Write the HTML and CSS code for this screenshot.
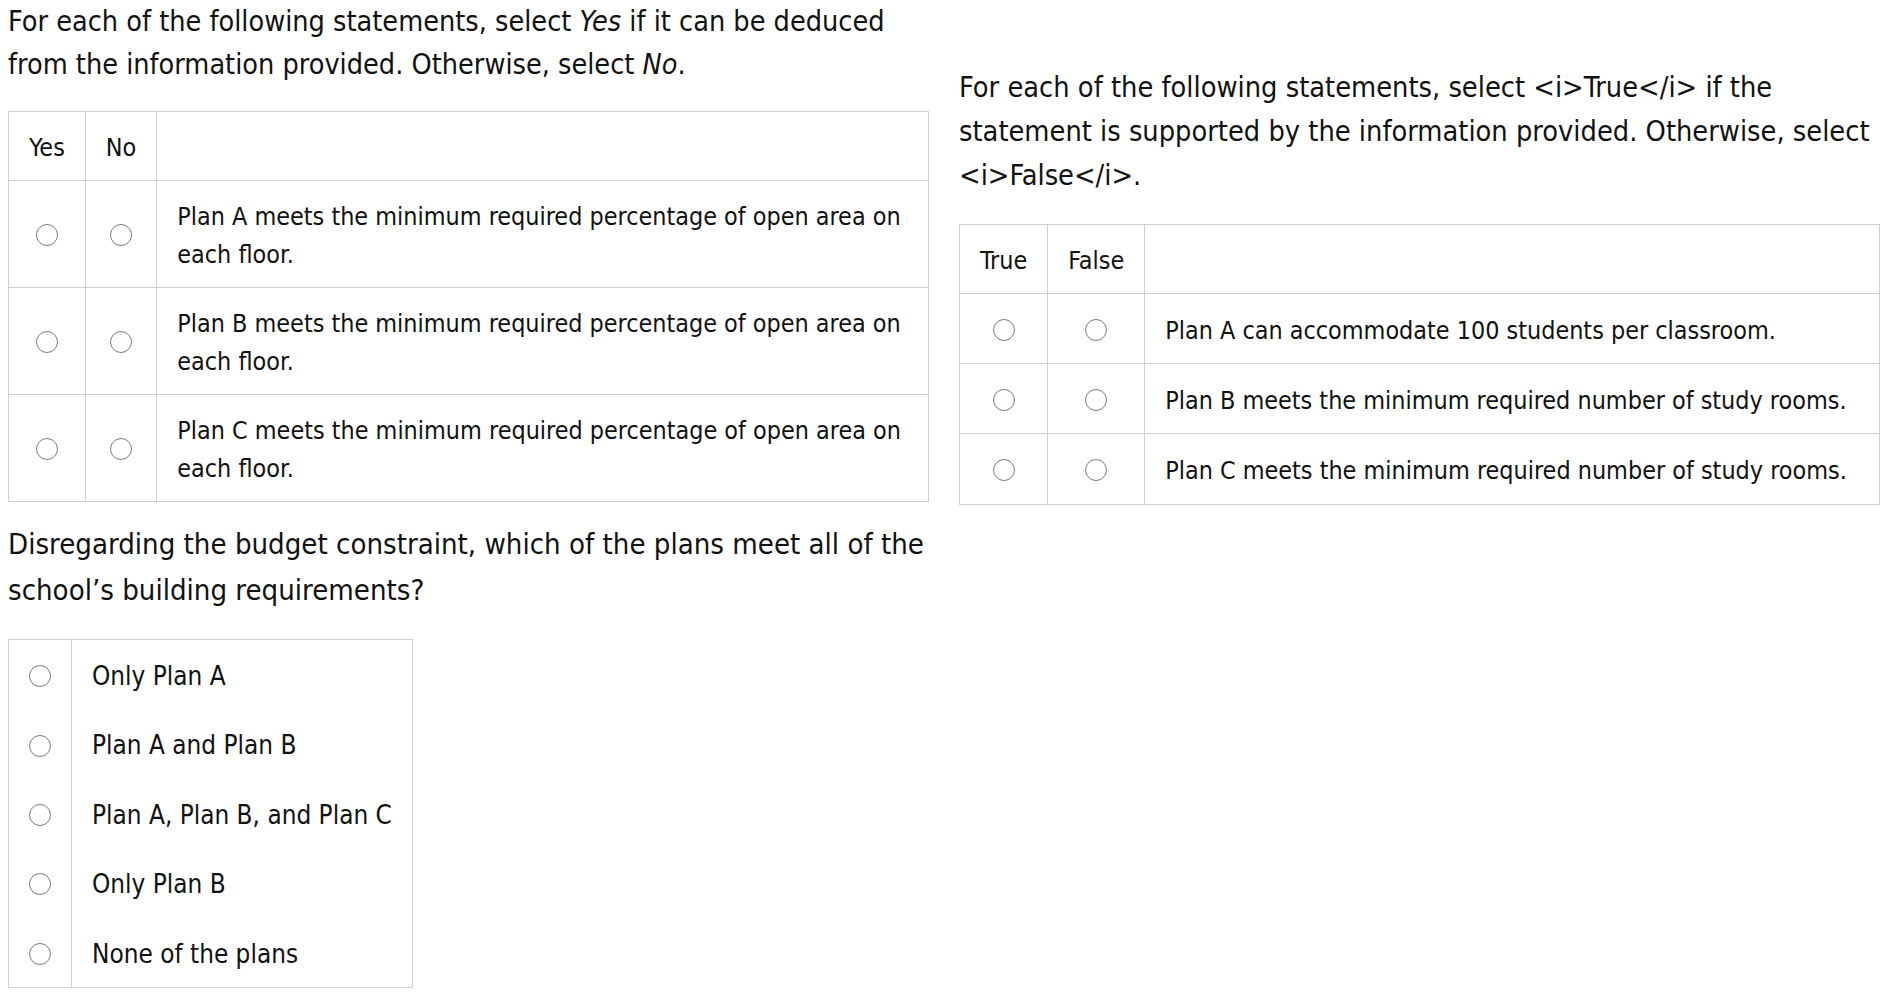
FILE: index.html
```html
<!DOCTYPE html>
<html>
<head>
<meta charset="utf-8">
<link rel="stylesheet" href="styles.css">
</head>
<body>
<div class="page">
  <section class="col col-left">
    <p class="prompt">For each of the following statements, select <i>Yes</i> if it can be deduced from the information provided. Otherwise, select <i>No</i>.</p>
    <table class="grid grid-wide">
      <tr class="head"><td class="opt">Yes</td><td class="opt">No</td><td class="stmt"></td></tr>
      <tr><td class="opt pick"><span class="radio"></span></td><td class="opt pick"><span class="radio"></span></td><td class="stmt">Plan A meets the minimum required percentage of open area on each floor.</td></tr>
      <tr><td class="opt pick"><span class="radio"></span></td><td class="opt pick"><span class="radio"></span></td><td class="stmt">Plan B meets the minimum required percentage of open area on each floor.</td></tr>
      <tr><td class="opt pick"><span class="radio"></span></td><td class="opt pick"><span class="radio"></span></td><td class="stmt">Plan C meets the minimum required percentage of open area on each floor.</td></tr>
    </table>
    <p class="question">Disregarding the budget constraint, which of the plans meet all of the school’s building requirements?</p>
    <table class="grid choices">
      <tr><td class="opt pick"><span class="radio"></span></td><td class="stmt">Only Plan A</td></tr>
      <tr><td class="opt pick"><span class="radio"></span></td><td class="stmt">Plan A and Plan B</td></tr>
      <tr><td class="opt pick"><span class="radio"></span></td><td class="stmt">Plan A, Plan B, and Plan C</td></tr>
      <tr><td class="opt pick"><span class="radio"></span></td><td class="stmt">Only Plan B</td></tr>
      <tr><td class="opt pick"><span class="radio"></span></td><td class="stmt">None of the plans</td></tr>
    </table>
  </section>
  <section class="col col-right">
    <p class="prompt">For each of the following statements, select &lt;i&gt;True&lt;/i&gt; if the statement is supported by the information provided. Otherwise, select &lt;i&gt;False&lt;/i&gt;.</p>
    <table class="grid grid-wide tf">
      <tr class="head"><td class="opt">True</td><td class="opt">False</td><td class="stmt"></td></tr>
      <tr><td class="opt pick"><span class="radio"></span></td><td class="opt pick"><span class="radio"></span></td><td class="stmt">Plan A can accommodate 100 students per classroom.</td></tr>
      <tr><td class="opt pick"><span class="radio"></span></td><td class="opt pick"><span class="radio"></span></td><td class="stmt">Plan B meets the minimum required number of study rooms.</td></tr>
      <tr><td class="opt pick"><span class="radio"></span></td><td class="opt pick"><span class="radio"></span></td><td class="stmt">Plan C meets the minimum required number of study rooms.</td></tr>
    </table>
  </section>
</div>
</body>
</html>
```
FILE: styles.css
```css
html, body {
  margin: 0;
  padding: 0;
  background: #fff;
}
body {
  font-family: "DejaVu Sans Condensed", "DejaVu Sans", Verdana, sans-serif;
  font-stretch: condensed;
  color: #111;
  padding: 0 8px;
}
.page {
  display: flex;
  gap: 30px;
  align-items: flex-start;
}
.col {
  flex: 1 1 0;
  min-width: 0;
}
.col-right {
  padding-top: 65px;
}
.prompt {
  margin: 0 0 25px;
  font-size: 28.55px;
  line-height: 43px;
}
.col-right .prompt {
  font-size: 28.7px;
  line-height: 44px;
  margin-bottom: 27px;
}
.question {
  margin: 19px 0 26px;
  font-size: 29.1px;
  line-height: 46px;
}
.grid {
  border-collapse: collapse;
  font-size: 24.9px;
  line-height: 38px;
}
.grid-wide {
  width: 100%;
}
.grid td {
  border: 1px solid #cfcfcf;
  padding: 17px 20px 13px;
  vertical-align: middle;
}
.grid td.pick {
  padding-top: 15px;
  padding-bottom: 15px;
}
.grid td.opt {
  text-align: center;
  white-space: nowrap;
  width: 1px;
}
.tf td.stmt {
  padding-right: 10px;
}
.tf tr:not(.head) td {
  padding-top: 17.6px;
  padding-bottom: 13.6px;
}
.tf tr:not(.head) td.pick {
  padding-top: 15.6px;
  padding-bottom: 15.6px;
}
.choices {
  border: 1px solid #cfcfcf;
  font-size: 25.9px;
}
.choices td {
  border-top: 0;
  border-bottom: 0;
  padding-top: 17px;
  padding-bottom: 14.4px;
}
.choices td.pick {
  padding-top: 15.7px;
  padding-bottom: 15.7px;
}
.radio {
  display: inline-block;
  width: 20px;
  height: 20px;
  border: 1.5px solid #7b7b7b;
  border-radius: 50%;
  vertical-align: middle;
  box-sizing: content-box;
}
```
